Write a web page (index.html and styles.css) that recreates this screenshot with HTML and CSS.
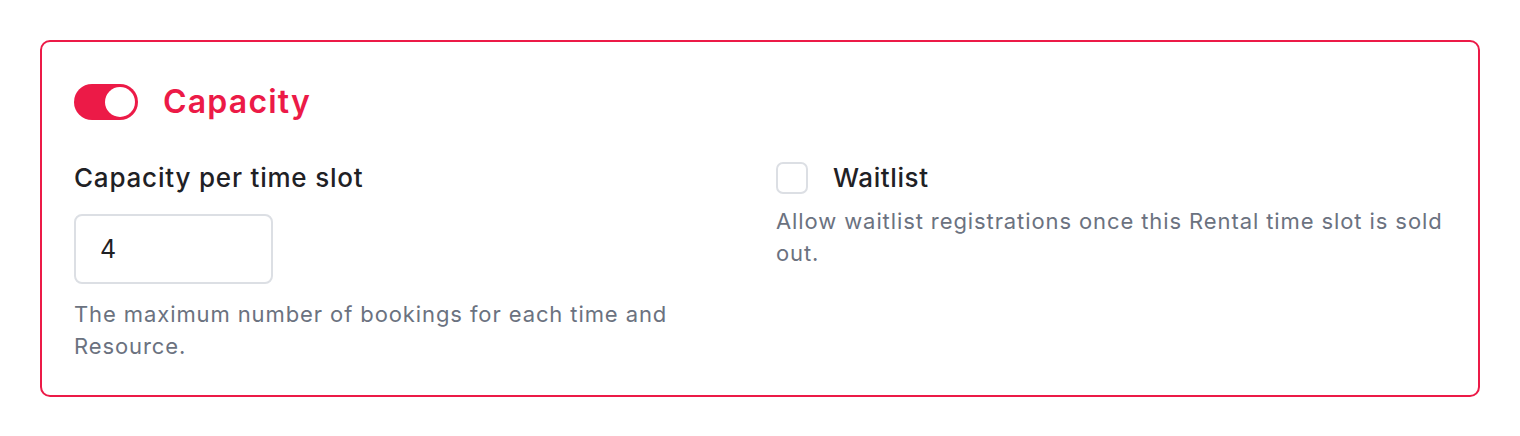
FILE: index.html
```html
<!DOCTYPE html>
<html lang="en">
<head>
    <meta charset="UTF-8">
    <meta name="viewport" content="width=device-width, initial-scale=1.0">
    <title>Capacity</title>
    <link rel="stylesheet" href="styles.css">
</head>
<body>
<div class="card">
    <div class="card-header">
        <label class="switch">
            <input type="checkbox" checked>
            <span class="slider"></span>
        </label>
        <h2>Capacity</h2>
    </div>
    <div class="columns">
        <div class="field">
            <label for="capacity" class="field-label">Capacity per time slot</label>
            <input type="text" id="capacity" class="text-input" value="4">
            <p class="help">The maximum number of bookings for each time and Resource.</p>
        </div>
        <div class="field">
            <label class="check-row">
                <input type="checkbox" class="check">
                <span>Waitlist</span>
            </label>
            <p class="help help-tight">Allow waitlist registrations once this Rental time slot is sold out.</p>
        </div>
    </div>
</div>
</body>
</html>
```

FILE: styles.css
```css
body {
    margin: 0;
    padding: 40px;
    background: #fff;
    font-family: Inter, "Noto Sans", sans-serif;
    color: #1f2125;
}
.card {
    border: 2px solid #ec1a47;
    border-radius: 10px;
    padding: 40px 32px 33px;
}
.card-header {
    display: flex;
    align-items: center;
    gap: 25px;
}
.card-header h2 {
    margin: 0;
    font-size: 32px;
    line-height: 40px;
    font-weight: 600;
    letter-spacing: 1.2px;
    color: #ec1a47;
}
.switch {
    position: relative;
    display: inline-block;
    width: 64px;
    height: 36px;
}
.switch input {
    opacity: 0;
    width: 0;
    height: 0;
}
.slider {
    position: absolute;
    inset: 0;
    background: #ec1a47;
    border-radius: 18px;
}
.slider:before {
    position: absolute;
    content: "";
    width: 30px;
    height: 30px;
    left: 3px;
    top: 3px;
    background: #fff;
    border-radius: 50%;
}
.switch input:checked + .slider:before {
    transform: translateX(28px);
}
.columns {
    display: grid;
    grid-template-columns: 1fr 1fr;
    gap: 32px;
    margin-top: 40px;
}
.field-label {
    display: block;
    font-size: 26px;
    line-height: 32px;
    font-weight: 500;
    letter-spacing: 0.8px;
}
.text-input {
    display: block;
    box-sizing: border-box;
    width: 199px;
    height: 70px;
    margin-top: 20px;
    padding: 0 24px;
    border: 2px solid #dcdfe4;
    border-radius: 8px;
    font-family: inherit;
    font-size: 25px;
    color: #1f2125;
    outline: none;
}
.help {
    margin: 14px 0 0;
    font-size: 22px;
    line-height: 32px;
    letter-spacing: 0.9px;
    color: #6b7280;
}
.help-tight {
    margin-top: 11px;
}
.check-row {
    display: flex;
    align-items: center;
    gap: 25px;
    font-size: 26px;
    line-height: 32px;
    font-weight: 500;
    letter-spacing: 0.6px;
}
.check {
    appearance: none;
    margin: 0;
    width: 32px;
    height: 32px;
    border: 2px solid #dcdfe4;
    border-radius: 7px;
    background: #fff;
}
```
